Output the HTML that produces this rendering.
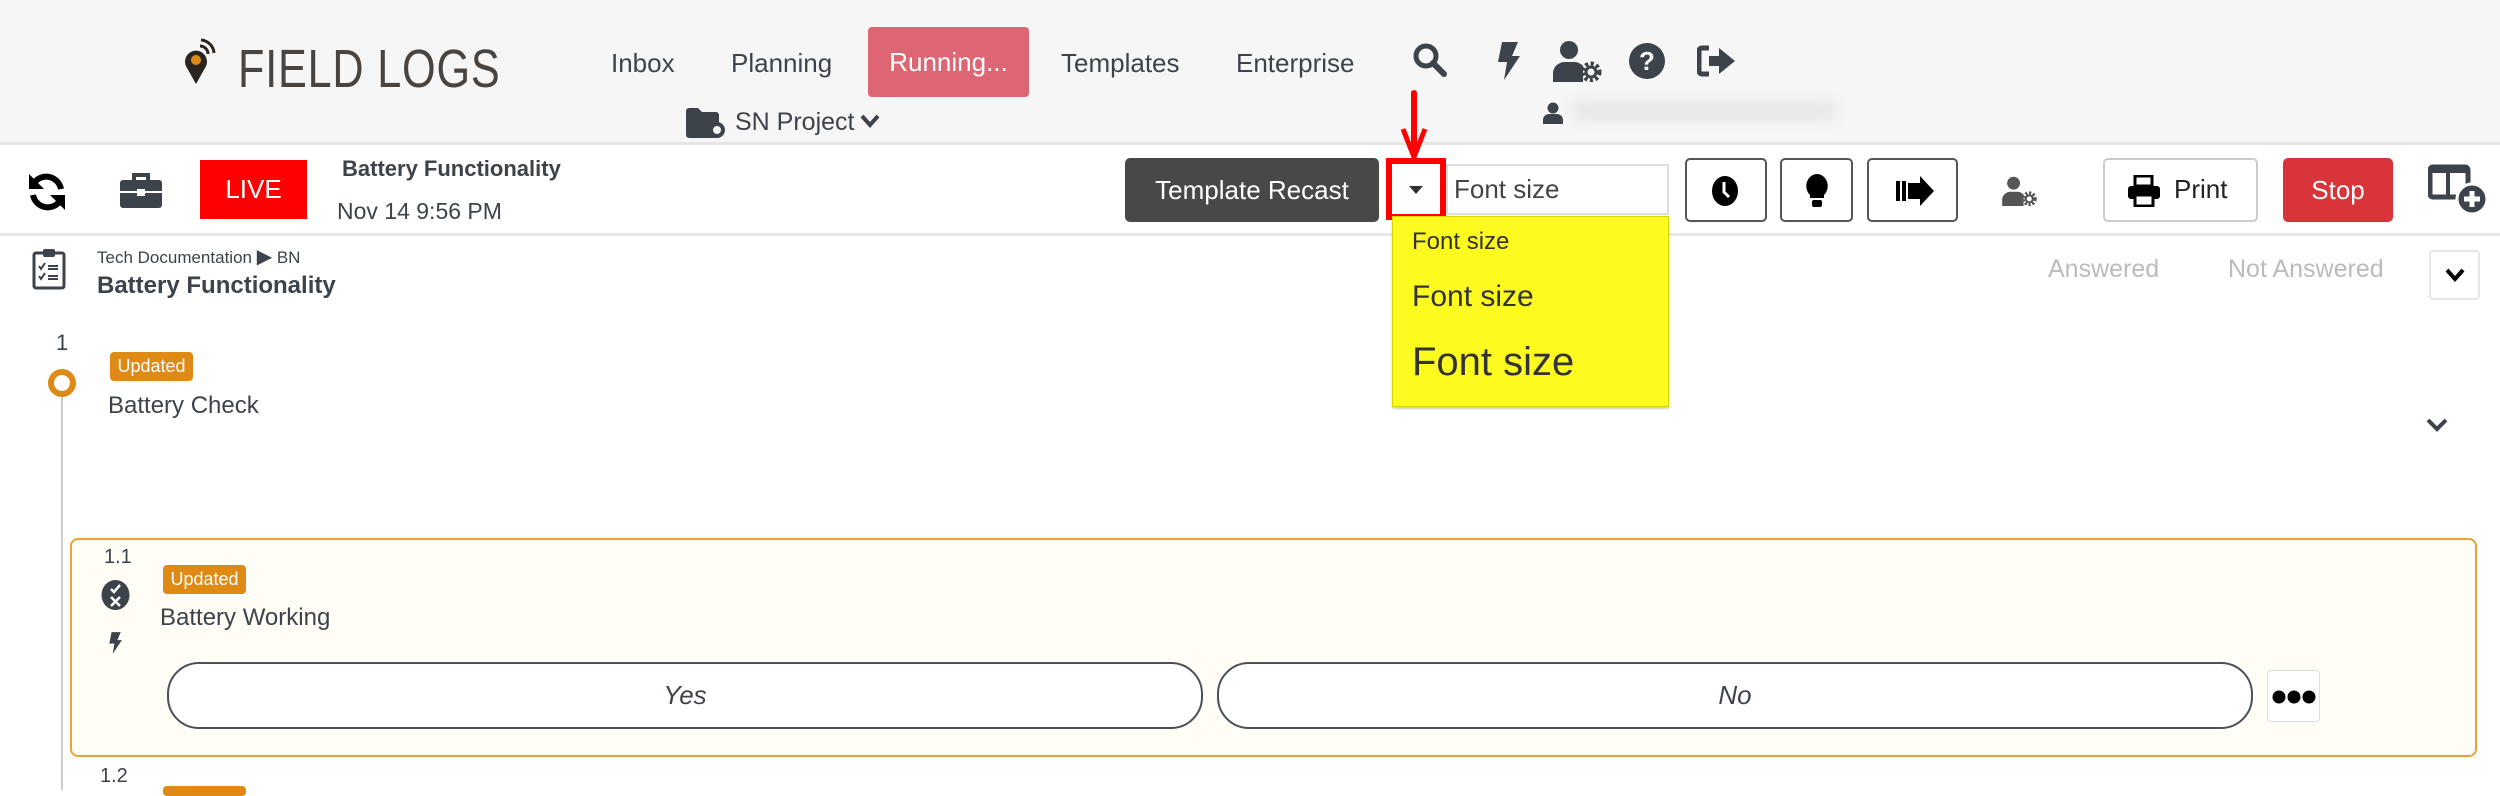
<!DOCTYPE html>
<html><head><meta charset="utf-8"><style>
*{margin:0;padding:0;box-sizing:border-box}
body{width:2500px;height:790px;position:relative;overflow:hidden;background:#fff;font-family:"Liberation Sans",sans-serif;color:#3d434a}
.a{position:absolute;white-space:nowrap}
.nav{font-size:26px;color:#3d434a;top:48px}
.btn{position:absolute;border:2px solid #555;border-radius:5px;background:#fff}
.badge{position:absolute;background:#e08a16;color:#fff;font-size:18px;border-radius:4px;text-align:center;line-height:29px}
</style></head><body>
<div class="a" style="left:0;top:0;width:2500px;height:145px;background:#f6f6f6;border-bottom:3px solid #e6e6e6"></div>
<!-- logo -->
<svg class="a" style="left:184px;top:38px" width="40" height="48" viewBox="0 0 40 48"><path d="M12 46 L3 30 A11 11 0 1 1 21 30 Z" fill="#2b2522"/><circle cx="12" cy="22" r="5" fill="#e08a16"/><path d="M16 8 A8 8 0 0 1 24 16 M17 2 A14 14 0 0 1 30 15" stroke="#2b2522" stroke-width="3" fill="none"/></svg>
<div class="a" style="left:238px;top:38px;font-size:54px;font-weight:normal;letter-spacing:1px;color:#4a4440;transform:scaleX(0.8);transform-origin:left">FIELD LOGS</div>
<div class="a nav" style="left:611px">Inbox</div>
<div class="a nav" style="left:731px">Planning</div>
<div class="a" style="left:868px;top:27px;width:161px;height:70px;background:#dc6673;border-radius:4px;color:#fff;font-size:26px;text-align:center;line-height:70px">Running...</div>
<div class="a nav" style="left:1061px">Templates</div>
<div class="a nav" style="left:1236px">Enterprise</div>
<svg class="a" style="left:1412px;top:42px" width="36" height="36" viewBox="0 0 36 36"><circle cx="14" cy="14" r="10" stroke="#3d434a" stroke-width="5" fill="none"/><path d="M21 21 L32 32" stroke="#3d434a" stroke-width="6" stroke-linecap="round"/></svg>
<svg class="a" style="left:1494px;top:42px" width="28" height="38" viewBox="0 0 28 38"><path d="M8 0 H24 L18 14 H26 L10 38 L13 20 H4 Z" fill="#3d434a"/></svg>
<svg class="a" style="left:1553px;top:40px" width="50" height="42" viewBox="0 0 50 42"><circle cx="16" cy="10" r="9" fill="#3d434a"/><path d="M0 42 V32 A12 12 0 0 1 12 22 H22 A12 12 0 0 1 30 26 V42 Z" fill="#3d434a"/><circle cx="38" cy="32" r="8" fill="none" stroke="#3d434a" stroke-width="5" stroke-dasharray="3 2.3"/><circle cx="38" cy="32" r="5" fill="none" stroke="#3d434a" stroke-width="3"/></svg>
<svg class="a" style="left:1628px;top:42px" width="38" height="38" viewBox="0 0 38 38"><circle cx="19" cy="19" r="18" fill="#3d434a"/><text x="19" y="28" font-size="26" font-weight="bold" fill="#f6f6f6" text-anchor="middle" font-family="Liberation Sans">?</text></svg>
<svg class="a" style="left:1697px;top:44px" width="40" height="34" viewBox="0 0 40 34"><path d="M12 4 H5 A3 3 0 0 0 2 7 V27 A3 3 0 0 0 5 30 H12" stroke="#3d434a" stroke-width="5" fill="none"/><path d="M12 12 H22 V4 L38 17 L22 30 V22 H12 Z" fill="#3d434a"/></svg>
<svg class="a" style="left:686px;top:108px" width="40" height="30" viewBox="0 0 40 30"><path d="M0 3 A3 3 0 0 1 3 0 H12 L16 4 H30 A3 3 0 0 1 33 7 V27 A3 3 0 0 1 30 30 H3 A3 3 0 0 1 0 27Z" fill="#3d434a"/><circle cx="31" cy="22" r="6" fill="#f6f6f6" stroke="#3d434a" stroke-width="4"/></svg>
<div class="a" style="left:735px;top:108px;font-size:25px;color:#3d434a">SN Project</div>
<svg class="a" style="left:860px;top:113px" width="20" height="16" viewBox="0 0 20 16"><path d="M2 3 L10 12 L18 3" stroke="#3d434a" stroke-width="4" fill="none"/></svg>
<svg class="a" style="left:1543px;top:102px" width="20" height="22" viewBox="0 0 20 22"><circle cx="10" cy="6" r="5.5" fill="#3d434a"/><path d="M0 22 V18 A6 6 0 0 1 6 12 H14 A6 6 0 0 1 20 18 V22Z" fill="#3d434a"/></svg>
<div class="a" style="left:1572px;top:100px;width:264px;height:22px;background:#e8e8e8;filter:blur(6px);border-radius:8px"></div>
<!-- red arrow -->
<div class="a" style="left:1411px;top:90px;width:6px;height:60px;background:#f00;border-radius:3px"></div>
<svg class="a" style="left:1400px;top:126px" width="28" height="34" viewBox="0 0 28 34"><path d="M3 3 L14 31 L25 3" stroke="#f00" stroke-width="5" fill="none" stroke-linejoin="round"/></svg>
<!-- toolbar -->
<svg class="a" style="left:26px;top:171px" width="42" height="42" viewBox="0 0 42 42"><path d="M35 18 A15 15 0 0 0 8 12" stroke="#000" stroke-width="6" fill="none"/><path d="M3 3 V18 H18Z" fill="#000"/><path d="M7 24 A15 15 0 0 0 34 30" stroke="#000" stroke-width="6" fill="none"/><path d="M39 39 V24 H24Z" fill="#000"/></svg>
<svg class="a" style="left:120px;top:172px" width="42" height="36" viewBox="0 0 42 36"><path d="M14 8 V3 H28 V8" stroke="#3d434a" stroke-width="4" fill="none"/><rect x="0" y="8" width="42" height="28" rx="3" fill="#3d434a"/><rect x="0" y="19" width="42" height="2" fill="#fff"/><rect x="17" y="17" width="8" height="7" fill="#fff"/></svg>
<div class="a" style="left:200px;top:160px;width:107px;height:59px;background:#f00;color:#fff;font-size:26px;text-align:center;line-height:59px">LIVE</div>
<div class="a" style="left:342px;top:156px;font-size:22px;font-weight:bold;color:#3d434a">Battery Functionality</div>
<div class="a" style="left:337px;top:198px;font-size:23px;color:#3d434a">Nov 14 9:56 PM</div>
<div class="a" style="left:1125px;top:158px;width:254px;height:64px;background:#484848;border-radius:5px;color:#fff;font-size:26px;text-align:center;line-height:64px">Template Recast</div>
<div class="a" style="left:1446px;top:164px;width:223px;height:51px;border:2px solid #ddd;background:#fff;font-size:26px;color:#444;padding-left:6px;line-height:47px">Font size</div>
<div class="a" style="left:1386px;top:158px;width:60px;height:62px;border:6px solid #f00;background:#fff"></div>
<svg class="a" style="left:1408px;top:185px" width="16" height="10"><path d="M1 1 H15 L8 9Z" fill="#333"/></svg>
<div class="btn" style="left:1685px;top:158px;width:82px;height:64px"></div>
<svg class="a" style="left:1711px;top:175px" width="28" height="32" viewBox="0 0 28 32"><ellipse cx="14" cy="16" rx="13" ry="15" fill="#000"/><path d="M13 7 V17 L18 22" stroke="#fff" stroke-width="3" fill="none"/></svg>
<div class="btn" style="left:1780px;top:158px;width:73px;height:64px"></div>
<svg class="a" style="left:1806px;top:174px" width="22" height="34" viewBox="0 0 22 34"><path d="M11 0 A11 12 0 0 1 18 21 V24 H4 V21 A11 12 0 0 1 11 0Z" fill="#000"/><rect x="6" y="26" width="10" height="7" rx="2" fill="#000"/></svg>
<div class="btn" style="left:1867px;top:158px;width:91px;height:64px"></div>
<svg class="a" style="left:1896px;top:176px" width="40" height="30" viewBox="0 0 40 30"><rect x="0" y="5" width="4" height="20" fill="#000"/><rect x="6" y="5" width="4" height="20" fill="#000"/><path d="M12 7 H24 V0 L38 15 L24 30 V23 H12Z" fill="#000"/></svg>
<svg class="a" style="left:2002px;top:176px" width="36" height="30" viewBox="0 0 50 42"><circle cx="16" cy="10" r="9" fill="#555"/><path d="M0 42 V32 A12 12 0 0 1 12 22 H22 A12 12 0 0 1 30 26 V42 Z" fill="#555"/><circle cx="38" cy="32" r="8" fill="none" stroke="#555" stroke-width="5" stroke-dasharray="3 2.3"/><circle cx="38" cy="32" r="5" fill="none" stroke="#555" stroke-width="3"/></svg>
<div class="a" style="left:2103px;top:158px;width:155px;height:64px;border:2px solid #ccc;border-radius:5px;background:#fff"></div>
<svg class="a" style="left:2128px;top:175px" width="32" height="32" viewBox="0 0 32 32"><rect x="7" y="1" width="17" height="10" fill="none" stroke="#000" stroke-width="3"/><rect x="0" y="11" width="32" height="13" rx="3" fill="#000"/><rect x="7" y="20" width="18" height="11" fill="#fff" stroke="#000" stroke-width="3"/></svg>
<div class="a" style="left:2174px;top:174px;font-size:26px;color:#222">Print</div>
<div class="a" style="left:2283px;top:158px;width:110px;height:64px;background:#d9343a;border-radius:5px;color:#fff;font-size:26px;text-align:center;line-height:64px">Stop</div>
<svg class="a" style="left:2428px;top:163px" width="62" height="52" viewBox="0 0 62 52"><rect x="2" y="4" width="38" height="30" rx="3" fill="none" stroke="#3d434a" stroke-width="5"/><rect x="18" y="4" width="4" height="30" fill="#3d434a"/><rect x="2" y="4" width="38" height="6" fill="#3d434a"/><circle cx="44" cy="36" r="15" fill="#3d434a" stroke="#fff" stroke-width="3"/><path d="M44 28 V44 M36 36 H52" stroke="#fff" stroke-width="5"/></svg>
<div class="a" style="left:0;top:233px;width:2500px;height:3px;background:#e8e8e8"></div>
<!-- dropdown -->
<div class="a" style="left:1392px;top:216px;width:277px;height:191px;background:#fdfa1f;border:1px solid #d8d400;box-shadow:0 2px 2px rgba(0,0,0,.2)"></div>
<div class="a" style="left:1412px;top:228px;font-size:24px;color:#333">Font size</div>
<div class="a" style="left:1412px;top:280px;font-size:30px;color:#333">Font size</div>
<div class="a" style="left:1412px;top:340px;font-size:40px;color:#333">Font size</div>
<!-- doc header -->
<svg class="a" style="left:32px;top:248px" width="34" height="42" viewBox="0 0 34 42"><rect x="2" y="5" width="30" height="35" rx="2" fill="none" stroke="#3d434a" stroke-width="3"/><rect x="11" y="1" width="12" height="8" rx="2" fill="#3d434a"/><path d="M7 18 L9 21 L13 15 M7 28 L9 31 L13 25 M16 18 H26 M16 21 H26 M16 28 H26 M16 31 H26" stroke="#3d434a" stroke-width="2" fill="none"/></svg>
<div class="a" style="left:97px;top:244px;font-size:17px;color:#3d434a">Tech Documentation <span style="font-size:20px">▶</span> BN</div>
<div class="a" style="left:97px;top:272px;font-size:24px;font-weight:bold;color:#3d434a">Battery Functionality</div>
<div class="a" style="left:2048px;top:255px;font-size:25px;color:#bbb">Answered</div>
<div class="a" style="left:2228px;top:255px;font-size:25px;color:#bbb">Not Answered</div>
<div class="a" style="left:2429px;top:250px;width:51px;height:50px;border:2px solid #e6e6e6;border-radius:4px;background:#fff"></div>
<svg class="a" style="left:2445px;top:268px" width="20" height="14"><path d="M2 2 L10 11 L18 2" stroke="#000" stroke-width="4" fill="none"/></svg>
<!-- timeline -->
<div class="a" style="left:61px;top:395px;width:2px;height:395px;background:#ccc"></div>
<div class="a" style="left:56px;top:330px;font-size:22px">1</div>
<div class="a" style="left:48px;top:369px;width:28px;height:28px;border-radius:50%;border:6px solid #e08a16;background:#fff"></div>
<div class="badge" style="left:110px;top:352px;width:83px">Updated</div>
<div class="a" style="left:108px;top:392px;font-size:24px;color:#3d434a">Battery Check</div>
<svg class="a" style="left:2426px;top:418px" width="22" height="14"><path d="M2 2 L11 11 L20 2" stroke="#3d434a" stroke-width="4" fill="none"/></svg>
<!-- card -->
<div class="a" style="left:70px;top:538px;width:2407px;height:219px;border:2px solid #e8a33a;border-radius:8px;background:#fffdf5"></div>
<div class="a" style="left:104px;top:546px;font-size:20px">1.1</div>
<svg class="a" style="left:101px;top:580px" width="29" height="30" viewBox="0 0 29 30"><ellipse cx="14.5" cy="15" rx="14" ry="15" fill="#3d434a"/><path d="M10 9 L13 12 L19 5 M10 17 L19 26 M19 17 L10 26" stroke="#fff" stroke-width="2.5" fill="none"/></svg>
<svg class="a" style="left:107px;top:630px" width="16" height="26" viewBox="0 0 28 38"><path d="M8 0 H24 L18 14 H26 L10 38 L13 20 H4 Z" fill="#3d434a"/></svg>
<div class="badge" style="left:163px;top:565px;width:83px">Updated</div>
<div class="a" style="left:160px;top:604px;font-size:24px;color:#3d434a">Battery Working</div>
<div class="a" style="left:167px;top:662px;width:1036px;height:67px;border:2px solid #4a5058;border-radius:32px;background:#fff;font-size:26px;font-style:italic;text-align:center;line-height:63px">Yes</div>
<div class="a" style="left:1217px;top:662px;width:1036px;height:67px;border:2px solid #4a5058;border-radius:32px;background:#fff;font-size:26px;font-style:italic;text-align:center;line-height:63px">No</div>
<div class="a" style="left:2267px;top:670px;width:53px;height:52px;border:1px solid #ddd;border-radius:4px;background:#fff"></div>
<svg class="a" style="left:2272px;top:690px" width="44" height="14"><circle cx="7" cy="7" r="6.5"/><circle cx="22" cy="7" r="6.5"/><circle cx="37" cy="7" r="6.5"/></svg>
<div class="a" style="left:100px;top:765px;font-size:20px">1.2</div>
<div class="a" style="left:163px;top:786px;width:83px;height:10px;background:#e08a16;border-radius:4px"></div>
</body></html>
